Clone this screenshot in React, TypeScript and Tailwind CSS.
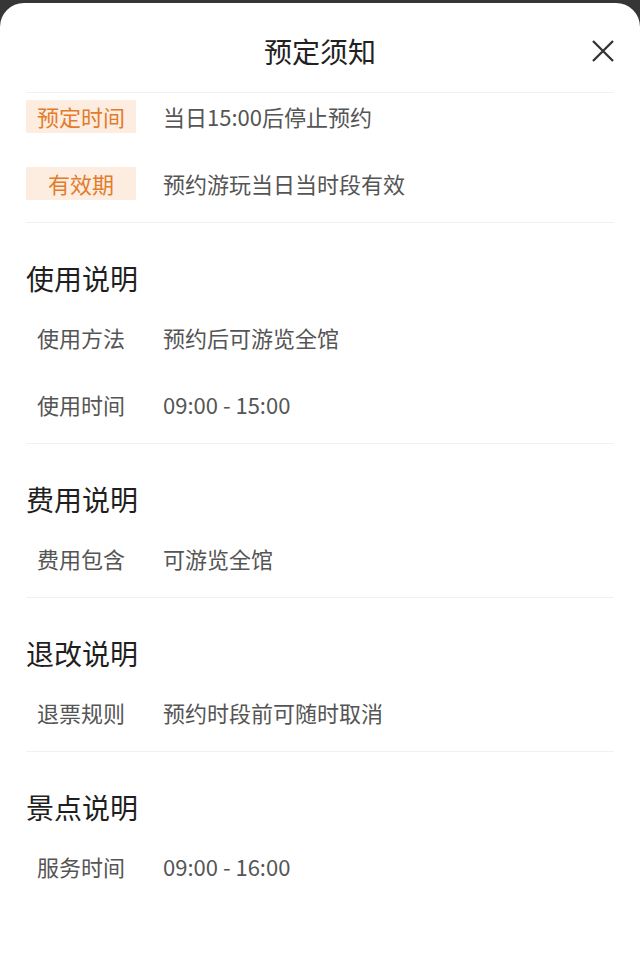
const font = { fontFamily: '"Noto Sans CJK SC", "Noto Sans", sans-serif' };

type Row = { label: string; value: string };

const badges: Row[] = [
  { label: "预定时间", value: "当日15:00后停止预约" },
  { label: "有效期", value: "预约游玩当日当时段有效" },
];

const sections: { title: string; rows: Row[] }[] = [
  {
    title: "使用说明",
    rows: [
      { label: "使用方法", value: "预约后可游览全馆" },
      { label: "使用时间", value: "09:00 - 15:00" },
    ],
  },
  { title: "费用说明", rows: [{ label: "费用包含", value: "可游览全馆" }] },
  { title: "退改说明", rows: [{ label: "退票规则", value: "预约时段前可随时取消" }] },
  { title: "景点说明", rows: [{ label: "服务时间", value: "09:00 - 16:00" }] },
];

function CloseIcon() {
  return (
    <svg className="w-[22px] h-[22px]" viewBox="0 0 22 22" fill="none" stroke="#333" strokeWidth={2.3}>
      <path d="M1 1l20 20M21 1L1 21" />
    </svg>
  );
}

function InfoRow({ row, badge }: { row: Row; badge?: boolean }) {
  return (
    <div className={`flex items-center ${badge ? "h-[33px]" : "h-[67px]"}`}>
      <div
        className={`w-[110px] h-[33px] flex items-center justify-center text-[22px] ${
          badge ? "bg-[#fdede1] text-[#e27c2c]" : "text-[#555]"
        }`}
      >
        {row.label}
      </div>
      <div className="ml-[27px] text-[22px] text-[#555]">{row.value}</div>
    </div>
  );
}

export default function App() {
  return (
    <div className="min-h-[959px] bg-[#363636] pt-[3px]" style={font}>
      <div className="min-h-[956px] rounded-t-[24px] bg-white">
        <div className="relative h-[89px] pt-[7px] flex items-center justify-center">
          <h1 className="text-[28px] text-[#222] leading-none">预定须知</h1>
          <button className="absolute right-[26px] top-[37px] text-[#333]">
            <CloseIcon />
          </button>
        </div>

        <div className="mx-[26px] border-t border-[#f0f0f0] pt-[7px] pb-[22px] flex flex-col gap-[34px]">
          {badges.map((b) => (
            <InfoRow key={b.label} row={b} badge />
          ))}
        </div>

        {sections.map((s) => (
          <div key={s.title} className="mx-[26px] pt-[29px] pb-[5px] border-t border-[#f0f0f0]">
            <div className="h-[52px] flex items-center text-[28px] text-[#1f1f1f]">{s.title}</div>
            {s.rows.map((r) => (
              <InfoRow key={r.label} row={r} />
            ))}
          </div>
        ))}
      </div>
    </div>
  );
}
